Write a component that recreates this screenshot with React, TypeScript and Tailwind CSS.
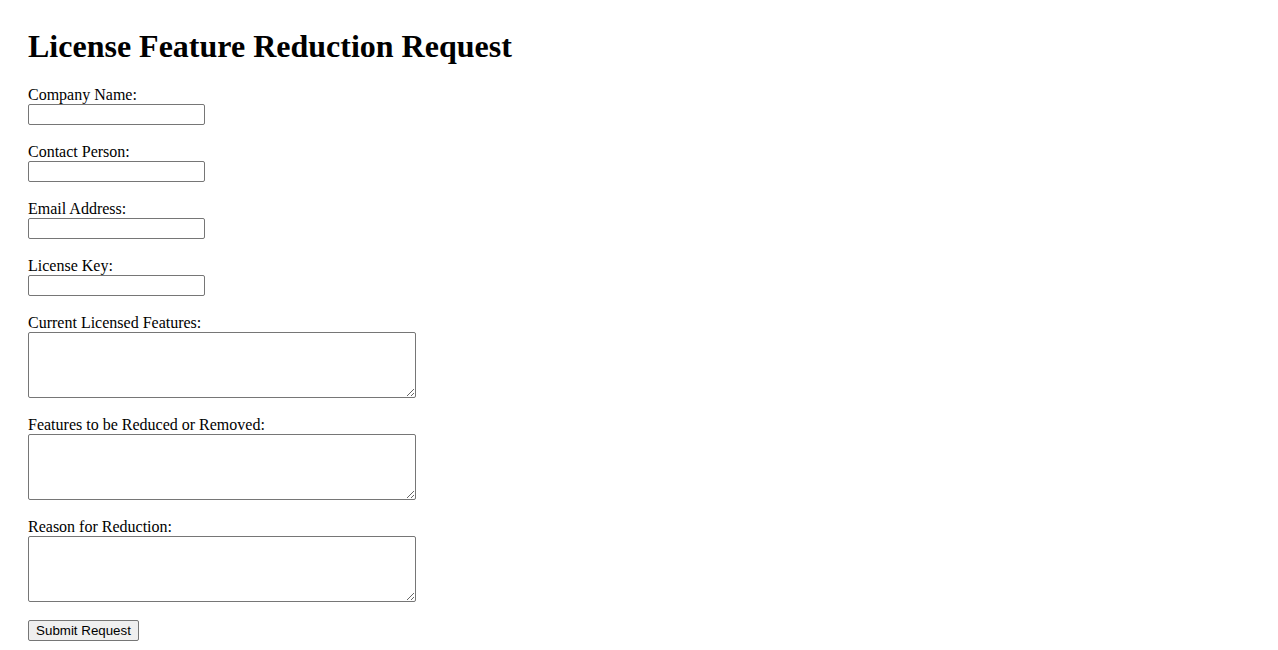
import React from 'react';

const inputFields = ['Company Name:', 'Contact Person:', 'Email Address:', 'License Key:'];
const areaFields = ['Current Licensed Features:', 'Features to be Reduced or Removed:', 'Reason for Reduction:'];

export default function App() {
  return (
    <div
      className="min-h-[650px] bg-white px-[28px] pt-[28px] text-black"
      style={{ fontFamily: '"Liberation Serif", "Times New Roman", serif' }}
    >
      <h1 className="mb-[21px] text-[32px] font-bold leading-[37px]">License Feature Reduction Request</h1>
      <form onSubmit={(e) => e.preventDefault()}>
        {inputFields.map((label) => (
          <div key={label} className="mb-[18px]">
            <label className="block h-[18px] text-[16px] leading-[18px]">{label}</label>
            <input
              type="text"
              className="block h-[21px] w-[177px] rounded-[2px] border border-[#767676] bg-white px-[2px] text-[13px]"
            />
          </div>
        ))}
        {areaFields.map((label) => (
          <div key={label} className="mb-[18px]">
            <label className="block h-[18px] text-[16px] leading-[18px]">{label}</label>
            <textarea className="block h-[66px] w-[388px] rounded-[2px] border border-[#767676] bg-white px-[2px] text-[13px]" />
          </div>
        ))}
        <button
          type="submit"
          className="block h-[21px] w-[111px] rounded-[2px] border border-[#767676] bg-[#efefef] text-[13.33px] leading-[19px] text-black"
          style={{ fontFamily: '"Liberation Sans", Arial, sans-serif' }}
        >
          Submit Request
        </button>
      </form>
    </div>
  );
}
